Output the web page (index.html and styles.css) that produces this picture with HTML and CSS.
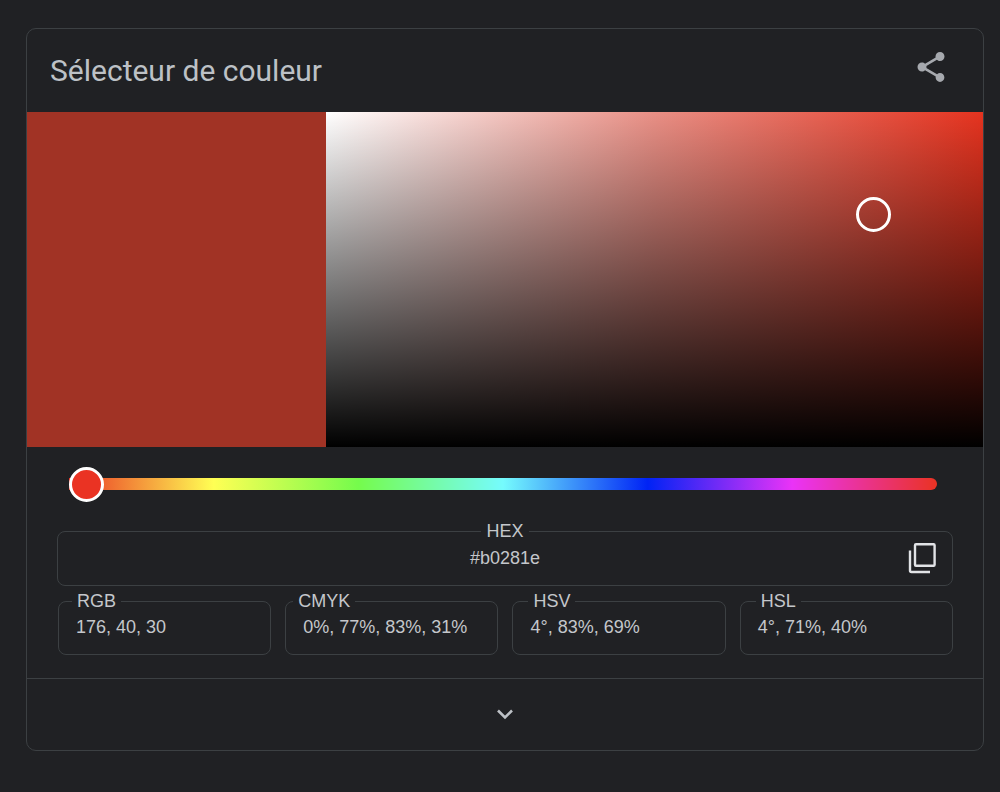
FILE: index.html
```html
<!DOCTYPE html>
<html lang="fr">
<head>
    <meta charset="UTF-8">
    <meta name="viewport" content="width=device-width, initial-scale=1.0">
    <title>Sélecteur de couleur</title>
    <link rel="stylesheet" href="styles.css">
</head>
<body>
    <main class="card">
        <header class="card-header">
            <h1 class="card-title">Sélecteur de couleur</h1>
            <svg class="share-icon" viewBox="0 0 24 24" aria-label="Partager">
                <path d="M18 16.08c-.76 0-1.44.3-1.96.77L8.91 12.7c.05-.23.09-.46.09-.7s-.04-.47-.09-.7l7.05-4.11c.54.5 1.25.81 2.04.81 1.66 0 3-1.34 3-3s-1.34-3-3-3-3 1.34-3 3c0 .24.04.47.09.7L8.04 9.81C7.5 9.31 6.79 9 6 9c-1.66 0-3 1.34-3 3s1.34 3 3 3c.79 0 1.5-.31 2.04-.81l7.12 4.16c-.05.21-.08.43-.08.65 0 1.61 1.31 2.92 2.92 2.92s2.92-1.31 2.92-2.92-1.31-2.92-2.92-2.92z"/>
            </svg>
        </header>

        <section class="picker">
            <div class="swatch"></div>
            <div class="saturation">
                <div class="saturation-handle"></div>
            </div>
        </section>

        <div class="hue-track">
            <div class="hue-handle"></div>
        </div>

        <section class="values">
            <fieldset class="field field-hex">
                <legend>HEX</legend>
                <div class="field-value">#b0281e</div>
                <svg class="copy-icon" viewBox="0 0 28 32" aria-label="Copier">
                    <path d="M8 2.200h17.600a1 1 0 0 1 1 1v19.600a1 1 0 0 1-1 1H8a1 1 0 0 1-1-1V3.200a1 1 0 0 1 1-1z"/>
                    <path d="M2 8.500v20a1.500 1.500 0 0 0 1.500 1.500H22"/>
                </svg>
            </fieldset>

            <div class="field-row">
                <fieldset class="field field-rgb">
                    <legend>RGB</legend>
                    <div class="field-value">176, 40, 30</div>
                </fieldset>
                <fieldset class="field field-cmyk">
                    <legend>CMYK</legend>
                    <div class="field-value">0%, 77%, 83%, 31%</div>
                </fieldset>
                <fieldset class="field field-hsv">
                    <legend>HSV</legend>
                    <div class="field-value">4°, 83%, 69%</div>
                </fieldset>
                <fieldset class="field field-hsl">
                    <legend>HSL</legend>
                    <div class="field-value">4°, 71%, 40%</div>
                </fieldset>
            </div>
        </section>

        <footer class="card-footer">
            <svg class="chevron-icon" viewBox="0 0 18 12" aria-label="Plus">
                <path d="M2 2.500l7 7 7-7"/>
            </svg>
        </footer>
    </main>
</body>
</html>
```

FILE: styles.css
```css
body {
    margin: 0;
    padding: 28px 16px 42px 26px;
    background-color: #202124;
    color: #c4c7cb;
    font-family: "Liberation Sans", Arial, sans-serif;
}

.card {
    border: 1px solid #3c4043;
    border-radius: 10px;
    overflow: hidden;
}

.card-header {
    height: 83px;
    padding: 0 34px 0 23px;
    box-sizing: border-box;
    display: flex;
    align-items: center;
    justify-content: space-between;
}

.card-title {
    margin: 0;
    font-family: "Roboto", sans-serif;
    font-size: 30px;
    font-weight: 400;
    color: #bdc1c6;
}

.share-icon {
    width: 36px;
    height: 36px;
    margin-top: -7px;
    fill: #a6a9ae;
}

.picker {
    display: flex;
    height: 335px;
}

.swatch {
    width: 299px;
    background-color: #a13325;
}

.saturation {
    flex: 1;
    position: relative;
    background: linear-gradient(to top, #000, transparent), linear-gradient(to right, #fff, #e98f85 50%, #e5331f);
}

.saturation-handle {
    position: absolute;
    left: 530px;
    top: 85px;
    width: 35px;
    height: 35px;
    box-sizing: border-box;
    border: 3px solid #fff;
    border-radius: 50%;
}

.hue-track {
    position: relative;
    height: 12px;
    margin: 31px 46px 0 42px;
    border-radius: 0 6px 6px 0;
    background: linear-gradient(to right, #ea3323, #ffff54 16.67%, #75fb4c 33.33%, #75fbfd 50%, #0023f5 66.67%, #ea33f7 83.33%, #ea3323);
}

.hue-handle {
    position: absolute;
    left: 0;
    top: -11px;
    width: 35px;
    height: 35px;
    box-sizing: border-box;
    border: 3px solid #fff;
    border-radius: 50%;
    background-color: #ea3323;
}

.values {
    padding: 31px 30px 0;
}

.field {
    position: relative;
    margin: 0;
    padding: 6px 0 17px;
    min-width: 0;
    border: 1px solid #3c4043;
    border-radius: 8px;
    font-size: 18px;
}

.field legend {
    padding: 0 5px;
    line-height: 20px;
}

.field-value {
    padding-left: 17px;
    line-height: 20px;
    white-space: pre;
}

.field-hex {
    padding: 7px 0 17px;
    text-align: center;
}

.field-hex legend {
    margin: 0 auto;
}

.field-hex .field-value {
    padding-left: 0;
}

.copy-icon {
    position: absolute;
    right: 16px;
    top: 1px;
    width: 28px;
    height: 32px;
    fill: none;
    stroke: #e1e3e6;
    stroke-width: 2.4;
}

.field-row {
    display: grid;
    grid-template-columns: repeat(4, 1fr);
    gap: 14px;
    margin: 5px 0 0 0.9px;
}

.field-rgb legend {
    margin-left: 13px;
}

.field-cmyk legend {
    margin-left: 7px;
}

.field-hsv legend {
    margin-left: 15px;
}

.field-hsl legend {
    margin-left: 15px;
}

.card-footer {
    height: 72px;
    margin-top: 23px;
    border-top: 1px solid #3c4043;
    box-sizing: border-box;
    display: flex;
    align-items: center;
    justify-content: center;
}

.chevron-icon {
    width: 18px;
    height: 12px;
    margin-top: -2px;
    fill: none;
    stroke: #bdc1c6;
    stroke-width: 2.6;
}
```
